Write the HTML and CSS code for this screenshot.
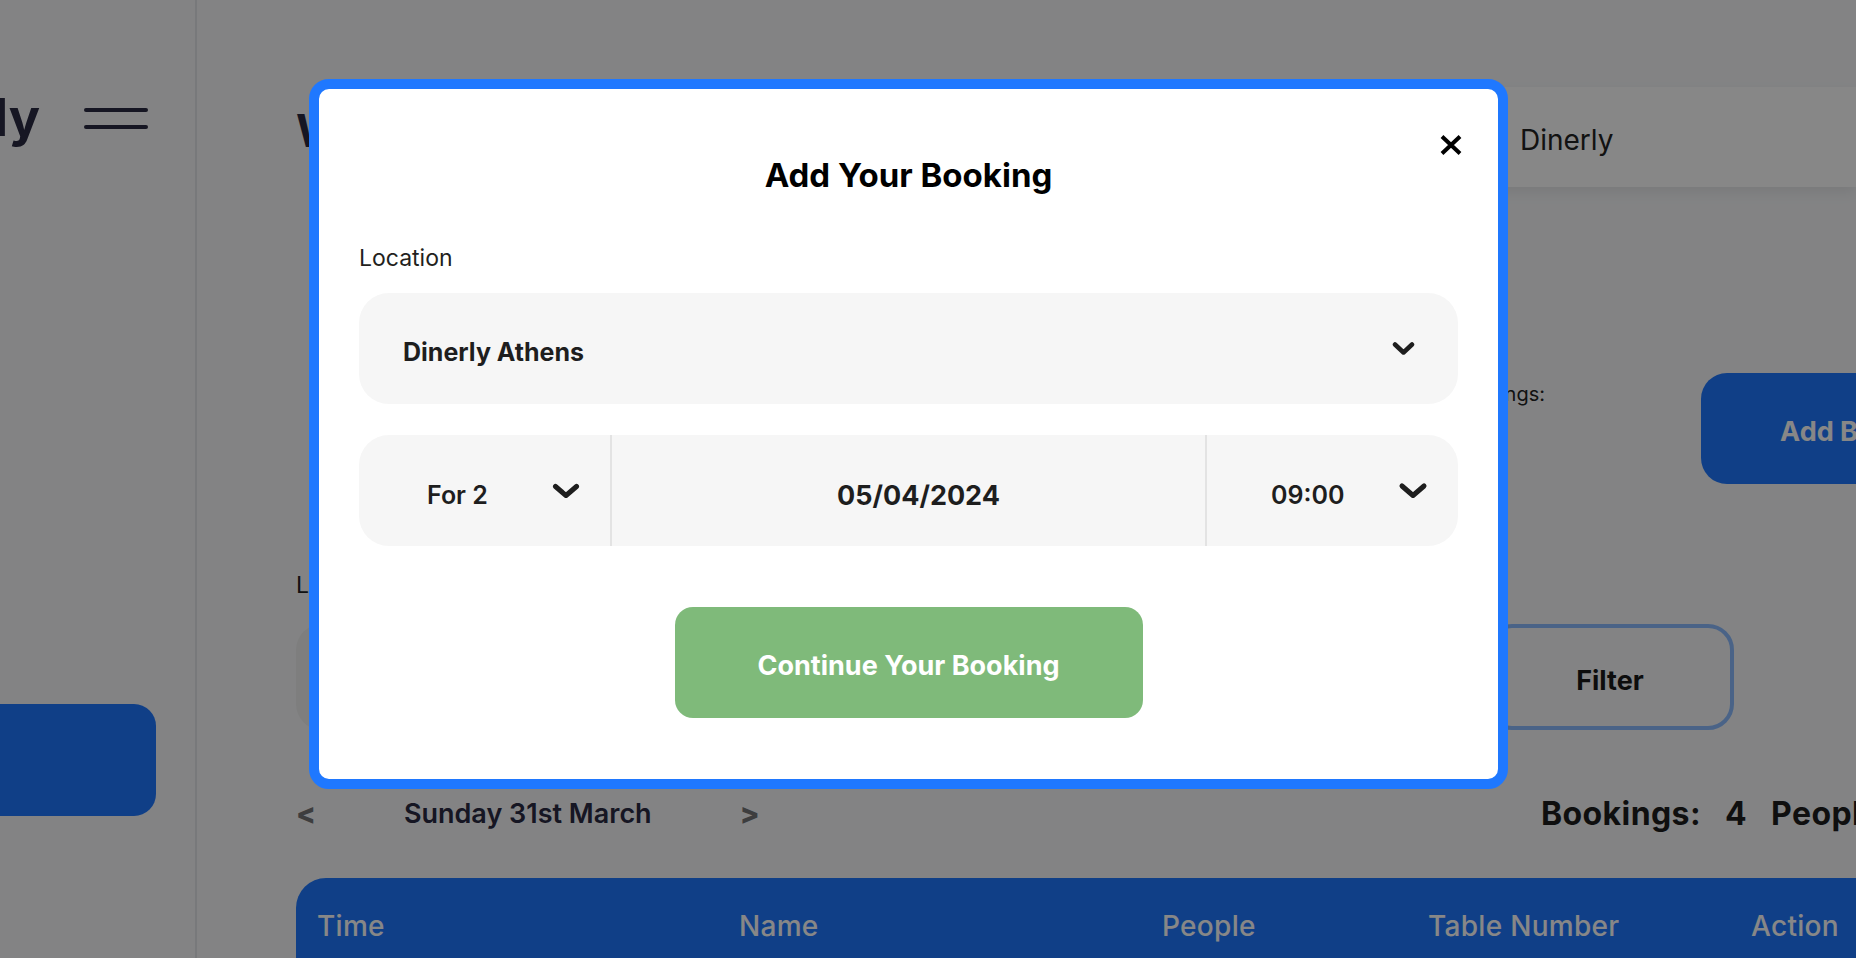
FILE: index.html
```html
<!DOCTYPE html>
<html lang="en">
<head>
<meta charset="utf-8">
<title>Dinerly - Bookings</title>
<link rel="stylesheet" href="styles.css">
</head>
<body>
<div class="app">
  <aside class="sidebar">
    <div class="side-head">
      <div class="logo-clip"><span class="logo">Dinerly</span></div>
      <div class="burger"><span></span><span></span></div>
    </div>
    <nav class="side-nav">
      <div class="nav-item active"></div>
    </nav>
  </aside>
  <main class="main">
    <header class="topbar">
      <h1 class="welcome">Welcome Back</h1>
      <div class="loc-switch"><span class="txt">Dinerly</span></div>
    </header>
    <section class="stats-row">
      <div class="stat"><span class="stat-label">Total Bookings:</span></div>
      <button class="add-btn"><span class="txt">Add Booking</span></button>
    </section>
    <section class="filter-block">
      <div class="filter-label">Location</div>
      <div class="filter-row">
        <div class="filter-select"></div>
        <button class="filter-btn"><span class="txt">Filter</span></button>
      </div>
    </section>
    <section class="day-row">
      <div class="day-nav">
        <span class="arrow">&lt;</span>
        <span class="day">Sunday 31st March</span>
        <span class="arrow">&gt;</span>
      </div>
      <div class="counts">
        <span>Bookings:</span><span>4</span><span>People:</span><span>10</span>
      </div>
    </section>
    <div class="table-head">
      <span>Time</span>
      <span>Name</span>
      <span>People</span>
      <span>Table Number</span>
      <span>Action</span>
    </div>
  </main>
</div>

<div class="overlay"></div>

<div class="modal">
  <button class="close" aria-label="Close">
    <svg width="22" height="20" viewBox="0 0 22 20"><path d="M2 1.5 L20 18.5 M20 1.5 L2 18.5" stroke="#000" stroke-width="4" fill="none"/></svg>
  </button>
  <h2 class="modal-title">Add Your Booking</h2>
  <div class="field-label">Location</div>
  <div class="select-box">
    <span class="txt">Dinerly Athens</span>
    <svg class="chev-sm" width="23" height="15" viewBox="0 0 23 15"><path d="M3 3.5 L11.5 11.5 L20 3.5" stroke="#1e1e1e" stroke-width="4.5" fill="none" stroke-linecap="round" stroke-linejoin="round"/></svg>
  </div>
  <div class="row">
    <div class="cell cell-guests">
      <span class="txt-lo">For 2</span>
      <svg width="28" height="16" viewBox="0 0 28 16"><path d="M3.5 3.5 L14 12.5 L24.5 3.5" stroke="#1e1e1e" stroke-width="5" fill="none" stroke-linecap="round" stroke-linejoin="round"/></svg>
    </div>
    <div class="cell cell-date"><span class="txt-lo">05/04/2024</span></div>
    <div class="cell cell-time">
      <span class="txt-lo">09:00</span>
      <svg width="30" height="17" viewBox="0 0 30 17"><path d="M4 4 L15 13.5 L26 4" stroke="#1e1e1e" stroke-width="5" fill="none" stroke-linecap="round" stroke-linejoin="round"/></svg>
    </div>
  </div>
  <button class="continue"><span class="txt">Continue Your Booking</span></button>
</div>
</body>
</html>
```

FILE: styles.css
```css
* { box-sizing: border-box; }

body {
  margin: 0;
  width: 1856px;
  height: 958px;
  overflow: hidden;
  position: relative;
  background: #f7f8fa;
  font-family: Inter, "Noto Sans", sans-serif;
  color: #222;
}

button { font-family: inherit; }

/* nudges text down to match the reference font's vertical metrics */
.txt { display: inline-block; padding-top: 6px; }
.txt-lo { display: inline-block; padding-top: 9px; }

.app {
  display: flex;
  height: 958px;
}

/* Sidebar */
.sidebar {
  width: 197px;
  flex: none;
  border-right: 2px solid #e2e4e8;
  background: #f7f8fa;
}

.side-head {
  margin-top: 88px;
  height: 60px;
  display: flex;
  align-items: center;
}

.logo-clip {
  width: 40px;
  overflow: hidden;
  display: flex;
  justify-content: flex-end;
}

.logo {
  font-size: 52px;
  line-height: 60px;
  font-weight: 700;
  color: #2b2b42;
  white-space: nowrap;
  flex: none;
}

.burger {
  margin-left: 44px;
  width: 64px;
  display: flex;
  flex-direction: column;
  gap: 13px;
}

.burger span {
  height: 4px;
  border-radius: 2px;
  background: #2b2b42;
}

.side-nav {
  margin-top: 556px;
  overflow: hidden;
}

.nav-item {
  margin-left: -40px;
  width: 196px;
  height: 112px;
  border-radius: 22px;
}

.nav-item.active { background: #1f78ff; }

/* Main */
.main {
  flex: 1;
  min-width: 0;
  padding-left: 99px;
}

.topbar {
  margin-top: 87px;
  height: 100px;
  display: flex;
}

.welcome {
  margin: 16px 0 0;
  font-size: 45px;
  line-height: 56px;
  font-weight: 700;
  color: #2b2b42;
  white-space: nowrap;
}

.loc-switch {
  margin-left: auto;
  width: 376px;
  height: 100px;
  background: #fff;
  border-radius: 10px 0 0 10px;
  box-shadow: 0 6px 14px rgba(0, 0, 0, 0.07);
  display: flex;
  align-items: center;
  padding-left: 40px;
  font-size: 28px;
  color: #222;
}

.stats-row {
  margin-top: 186px;
  height: 111px;
  display: grid;
  grid-template-columns: 1249px 326px;
  column-gap: 156px;
}

.stat {
  text-align: right;
  padding-top: 8px;
}

.stat-label {
  font-size: 20px;
  line-height: 26px;
  color: #222;
}

.add-btn {
  height: 111px;
  border: none;
  border-radius: 26px;
  background: #1f78ff;
  color: #fff;
  font-size: 27px;
  font-weight: 700;
}

.filter-block { margin-top: 86px; }

.filter-label {
  font-size: 23px;
  line-height: 30px;
  color: #222;
}

.filter-row {
  margin-top: 24px;
  display: flex;
  gap: 28px;
}

.filter-select {
  width: 1162px;
  height: 106px;
  border-radius: 26px;
  background: #eeeeee;
}

.filter-btn {
  width: 248px;
  height: 106px;
  border: 4px solid #8cbcff;
  border-radius: 26px;
  background: transparent;
  font-size: 27px;
  font-weight: 700;
  color: #1a1a1a;
}

.day-row {
  margin-top: 63px;
  height: 40px;
  display: flex;
  align-items: center;
}

.day-nav {
  width: 1245px;
  flex: none;
  display: flex;
  align-items: center;
  gap: 88px;
}

.arrow {
  font-size: 29px;
  font-weight: 800;
  color: #737375;
}

.day {
  font-size: 27px;
  font-weight: 600;
  color: #2b2b42;
}

.counts {
  display: flex;
  gap: 24px;
  font-size: 32px;
  letter-spacing: 0.4px;
  font-weight: 700;
  color: #1e1e1e;
  white-space: nowrap;
}

.table-head {
  margin-top: 45px;
  width: 1700px;
  height: 100px;
  background: #1f78ff;
  border-radius: 30px 30px 0 0;
  display: grid;
  grid-template-columns: 422px 423px 266px 323px 200px;
  padding: 31px 0 0 21px;
  font-size: 28px;
  letter-spacing: 0.3px;
  line-height: 34px;
  font-weight: 500;
  color: #fff;
}

/* Overlay + modal */
.overlay {
  position: fixed;
  inset: 0;
  background: rgba(0, 0, 0, 0.47);
}

.modal {
  position: absolute;
  left: 309px;
  top: 79px;
  width: 1199px;
  border: 10px solid #1f78ff;
  border-radius: 20px;
  background: #fff;
  padding: 66px 40px 61px;
  display: flex;
  flex-direction: column;
}

.close {
  position: absolute;
  top: 46px;
  right: 36px;
  width: 22px;
  height: 20px;
  padding: 0;
  border: none;
  background: none;
  display: flex;
}

.modal-title {
  margin: 0;
  text-align: center;
  font-size: 33px;
  line-height: 40px;
  font-weight: 700;
  color: #000;
}

.field-label {
  margin-top: 48px;
  font-size: 23px;
  line-height: 30px;
  color: #231f20;
}

.select-box {
  margin-top: 20px;
  height: 111px;
  border-radius: 30px;
  background: #f6f6f6;
  display: flex;
  align-items: center;
  justify-content: space-between;
  padding: 0 43px 0 44px;
  font-size: 25px;
  font-weight: 700;
  color: #1e1e1e;
}

.row {
  margin-top: 31px;
  height: 111px;
  border-radius: 30px;
  background: #f6f6f6;
  display: grid;
  grid-template-columns: 253px 1fr 253px;
  overflow: hidden;
  color: #1e1e1e;
}

.cell {
  display: flex;
  align-items: center;
}

.cell-guests {
  justify-content: space-between;
  padding: 0 30px 0 68px;
  border-right: 2px solid #e3e3e3;
  font-size: 25px;
  font-weight: 600;
}

.cell-date {
  justify-content: center;
  padding-left: 20px;
  font-size: 27px;
  font-weight: 700;
}

.cell-time {
  justify-content: space-between;
  padding: 0 30px 0 64px;
  border-left: 2px solid #e3e3e3;
  font-size: 25px;
  font-weight: 600;
}

.continue {
  margin-top: 61px;
  align-self: center;
  width: 468px;
  height: 111px;
  border: none;
  border-radius: 18px;
  background: #7fba7a;
  color: #fff;
  font-size: 27px;
  font-weight: 700;
}
```
